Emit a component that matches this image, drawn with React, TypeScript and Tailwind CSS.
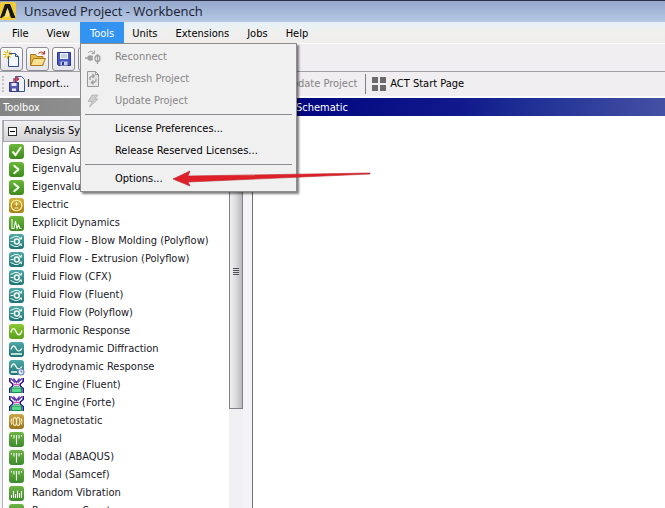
import type { ReactNode } from 'react'
import { clsx } from 'clsx'

type IconKind =
  | 'design'
  | 'eigen'
  | 'electric'
  | 'explicit'
  | 'fluid'
  | 'harmonic'
  | 'hydro'
  | 'hydroTime'
  | 'engine'
  | 'magnet'
  | 'modal'
  | 'random'

const SYSTEMS: { label: string; icon: IconKind }[] = [
  { label: 'Design Assessment', icon: 'design' },
  { label: 'Eigenvalue Buckling', icon: 'eigen' },
  { label: 'Eigenvalue Buckling (Samcef)', icon: 'eigen' },
  { label: 'Electric', icon: 'electric' },
  { label: 'Explicit Dynamics', icon: 'explicit' },
  { label: 'Fluid Flow - Blow Molding (Polyflow)', icon: 'fluid' },
  { label: 'Fluid Flow - Extrusion (Polyflow)', icon: 'fluid' },
  { label: 'Fluid Flow (CFX)', icon: 'fluid' },
  { label: 'Fluid Flow (Fluent)', icon: 'fluid' },
  { label: 'Fluid Flow (Polyflow)', icon: 'fluid' },
  { label: 'Harmonic Response', icon: 'harmonic' },
  { label: 'Hydrodynamic Diffraction', icon: 'hydro' },
  { label: 'Hydrodynamic Response', icon: 'hydroTime' },
  { label: 'IC Engine (Fluent)', icon: 'engine' },
  { label: 'IC Engine (Forte)', icon: 'engine' },
  { label: 'Magnetostatic', icon: 'magnet' },
  { label: 'Modal', icon: 'modal' },
  { label: 'Modal (ABAQUS)', icon: 'modal' },
  { label: 'Modal (Samcef)', icon: 'modal' },
  { label: 'Random Vibration', icon: 'random' },
  { label: 'Response Spectrum', icon: 'random' },
]

const TILE: Record<IconKind, string> = {
  design: 'from-[#6cb83a] to-[#3c8a1c]',
  eigen: 'from-[#6cb83a] to-[#3c8a1c]',
  electric: 'from-[#d6b43c] to-[#a87c10]',
  explicit: 'from-[#6cb83a] to-[#3c8a1c]',
  fluid: 'from-[#4fa9a8] to-[#1c7478]',
  harmonic: 'from-[#8cc832] to-[#5ca01c]',
  hydro: 'from-[#4fa9a8] to-[#1c7478]',
  hydroTime: 'from-[#4fa9a8] to-[#1c7478]',
  engine: 'from-white to-white',
  magnet: 'from-[#c8a848] to-[#987420]',
  modal: 'from-[#6cb444] to-[#3c8a2c]',
  random: 'from-[#6cb444] to-[#3c8a2c]',
}

const GLYPH: Record<IconKind, ReactNode> = {
  design: <path d="M3.500 7.500 6.500 11l5.500-8" strokeWidth="2" />,
  eigen: <path d="M5 3c.5 2.500 4 3 4.500 4.500C9 9 5.500 9.500 5 12" strokeWidth="2" />,
  electric: (
    <g stroke="#fff4b0">
      <circle cx="7.500" cy="7.500" r="5.300" />
      <path d="M5.500 6h4M7.500 4v4M5.500 10h4" />
    </g>
  ),
  explicit: <path d="M3 3v9.500h2L6.500 5 8 12.500 9.500 9l1.500 3.500h1.500" />,
  fluid: (
    <g>
      <circle cx="7.800" cy="7.500" r="2.400" strokeWidth="1.500" />
      <path d="M1.500 7.500h3" />
      <path d="M1.500 4.500 4 3.500c2.500-1.800 5.500-1.300 7.500 1M1.500 10.500l2.500 1c2.500 1.800 5.500 1.300 7.500-1" strokeWidth="1" />
      <path d="m13 2.500-.3 3.300-3-.8zM13 12.500l-.3-3.300-3 .8z" fill="#f4fff0" stroke="none" />
    </g>
  ),
  harmonic: <path d="M2 8.500c1-5 3.500-5 5-1s4 5 6-1" strokeWidth="1.400" />,
  hydro: <path d="M2 7.500c1.500-4.500 3.500-4.500 5-1s4 3 6 0M2 12h11" strokeWidth="1.300" />,
  hydroTime: (
    <g>
      <path d="M2 7.500c1.500-4.500 3.500-4.500 5-1s4 3 6 0M2 12h6" strokeWidth="1.300" />
      <circle cx="12" cy="12" r="3" fill="#e8f0ff" stroke="#6c8cc0" />
      <path d="M12 10.500V12h1.500" stroke="#305090" strokeWidth=".8" />
    </g>
  ),
  engine: (
    <g>
      <path d="M.8 0v3.500l3 2.500v2l-3 2.500v4.500M14.200 0v3.500l-3 2.500v2l3 2.500v4.500" stroke="#241890" strokeWidth="1.600" />
      <path d="m2 .5 4 4M13 .5l-4 4M4.500.500l3 4 3-4" stroke="#6038b0" strokeWidth="1.400" />
      <path d="M4.500 6.500h6" stroke="#d850c0" strokeWidth="1.500" />
      <path d="M2.500 10h10v4.500h-10z" fill="#58d890" stroke="#189048" />
      <path d="M5 8.500h5" stroke="#40b870" />
    </g>
  ),
  magnet: (
    <g stroke="#fff4c8">
      <ellipse cx="5.800" cy="7.500" rx="1.700" ry="4" />
      <ellipse cx="9.200" cy="7.500" rx="1.700" ry="4" />
      <path d="M2.700 4.500c-1 2-1 4 0 6M12.300 4.500c1 2 1 4 0 6" />
    </g>
  ),
  modal: <path d="M7.500 3v9.500M5 3v3.500M10 3v3.500M2.500 3v1.500M12.500 3v1.500" />,
  random: <path d="M2.500 12V9M4.500 12V5M6.500 12V8M8.500 12V4.500M10.500 12V7M12.500 12V5" />,
}

function SystemIcon({ kind }: { kind: IconKind }) {
  return (
    <span className={clsx('block size-[15px] shrink-0 rounded-[3px] bg-linear-to-b', TILE[kind])}>
      <svg viewBox="0 0 15 15" className="size-full overflow-visible" fill="none" stroke="#f4fff0" strokeWidth="1.100" aria-hidden>
        {GLYPH[kind]}
      </svg>
    </span>
  )
}

function LogoIcon() {
  return (
    <svg viewBox="0 0 16 18" className="h-[18px] w-4 shrink-0" aria-hidden>
      <rect width="16" height="18" rx="2" fill="#f2cc38" />
      <path d="M5 2h5l5.500 14H11L7.500 6 5 13.500 1.500 16H0z" fill="#181818" />
      <path d="m7.500 6 2 6-1.500 3H4.500z" fill="#fbe488" />
    </svg>
  )
}

function NewIcon() {
  return (
    <svg viewBox="0 0 18 18" className="size-[18px]" aria-hidden>
      <path d="M5.500 3.500h7l3 3v10h-10z" fill="#f4f8ff" stroke="#30508c" />
      <path d="M12.500 3.500v3h3" fill="#b8cce8" stroke="#30508c" />
      <path d="M4.500 0v9M0 4.500h9M1.300 1.300l6.400 6.400M7.700 1.300 1.300 7.700" stroke="#d8b820" strokeWidth="1.200" />
      <circle cx="4.500" cy="4.500" r="1.500" fill="#fff6a0" />
    </svg>
  )
}

function OpenIcon() {
  return (
    <svg viewBox="0 0 18 18" className="size-[18px]" aria-hidden>
      <path d="M1.500 15.500v-11h5l1.500 2h6v9z" fill="#e8b848" stroke="#a87820" />
      <path d="m1.500 15.500 3-7h12l-3 7z" fill="#fbe090" stroke="#a87820" />
      <path d="M9.500 3.500c1.500-2 4-2 5.500 0M15.500 1v3h-3" fill="none" stroke="#c03828" strokeWidth="1.200" />
    </svg>
  )
}

function SaveIcon() {
  return (
    <svg viewBox="0 0 18 18" className="size-[18px]" aria-hidden>
      <path d="M2.500 2.500h13v13h-12l-1-1z" fill="#4858c0" stroke="#2c3890" />
      <path d="M5 3h8v6H5z" fill="#eef2ff" />
      <path d="M6 5h6M6 7h6" stroke="#a0a8d8" />
      <path d="M5.500 11.500h7v4h-7z" fill="#c8d0f0" />
      <path d="M7 12h2v3H7z" fill="#2c3890" />
    </svg>
  )
}

function ImportIcon() {
  return (
    <svg viewBox="0 0 16 16" className="size-4" aria-hidden>
      <path d="M6.500.500h6l3 3v12h-9z" fill="#eef4ff" stroke="#38588c" />
      <path d="M.5 6.500h9v9h-9z" fill="#5858b0" stroke="#383880" />
      <path d="M2.500 7h5v3h-5zM3 12.500h4V15H3z" fill="#e4e8fc" />
      <path d="M5 7V3h4M7 .5 9.500 3 7 5.500" fill="none" stroke="#b03858" strokeWidth="1.500" />
    </svg>
  )
}

function ReconnectIcon() {
  return (
    <svg viewBox="0 0 16 16" className="size-4" fill="none" stroke="#a0a0a0" strokeWidth="1.300" aria-hidden>
      <circle cx="5" cy="9" r="2" fill="#a0a0a0" />
      <path d="M0 9h3M5 7.500h3M5 10.500h3M12.500 5v10" />
      <ellipse cx="12.500" cy="9.500" rx="2.500" ry="3" />
      <path d="M3 4C5 1.500 7 2 9 4M9.500 1.500v3H6.500" strokeWidth="1" />
    </svg>
  )
}

function RefreshIcon() {
  return (
    <svg viewBox="0 0 16 16" className="size-4" fill="none" stroke="#989898" aria-hidden>
      <path d="M2.500.500h8l3 3v12h-11z" fill="#e8e8e8" />
      <path d="M10.500.500v3h3" />
      <path d="M5 9V6.500L7 5h2M7.500 3 9.500 5l-2 2M11 7.500V10l-2 1.500H7M8.500 9.500l-2 2 2 2" strokeWidth="1.200" />
    </svg>
  )
}

function UpdateIcon() {
  return (
    <svg viewBox="0 0 16 16" className="size-4" aria-hidden>
      <path d="M7 2h6l-3 4h3L4.500 14 7 8.500H3z" fill="#cccccc" stroke="#b0b0b0" strokeWidth=".8" />
    </svg>
  )
}

function TilesIcon() {
  return (
    <svg viewBox="0 0 14 14" className="size-3.5" fill="#6a6a6a" aria-hidden>
      <path d="M0 0h6v6H0zM8 0h6v6H8zM0 8h6v6H0zM8 8h6v6H8z" />
    </svg>
  )
}

interface MenuEntryProps {
  label: string
  icon?: ReactNode
  disabled?: boolean
}

function MenuEntry({ label, icon, disabled }: MenuEntryProps) {
  return (
    <button
      type="button"
      role="menuitem"
      disabled={disabled}
      className="flex h-[22px] w-full items-center gap-3.5 pl-1 text-left text-black disabled:text-[#858585]"
    >
      <span className="size-4 shrink-0">{icon}</span>
      {label}
    </button>
  )
}

function MenuRule() {
  return <div role="separator" className="mx-1 mt-0.5 mb-[3px] h-px bg-[#8a8a90]" />
}

function ToolsMenu() {
  return (
    <div
      role="menu"
      aria-label="Tools"
      className="absolute top-full left-0 z-10 w-[217px] border border-[#8c8c8c] bg-[#f1f0f1] pt-0.5 pb-px shadow-[2px_2px_2px_rgba(0,0,0,0.5)]"
    >
      <MenuEntry label="Reconnect" icon={<ReconnectIcon />} disabled />
      <MenuEntry label="Refresh Project" icon={<RefreshIcon />} disabled />
      <MenuEntry label="Update Project" icon={<UpdateIcon />} disabled />
      <MenuRule />
      <MenuEntry label="License Preferences..." />
      <MenuEntry label="Release Reserved Licenses..." />
      <MenuRule />
      <MenuEntry label="Options..." />
      {/* Pointer to the Options entry */}
      <svg viewBox="0 0 200 18" className="pointer-events-none absolute bottom-1 left-[91px] h-[18px] w-[200px]" aria-hidden>
        <path d="M1 10 18 2l-2 5 182-3v1L16 13l2 4z" fill="#e02028" stroke="#b82028" strokeWidth=".6" />
      </svg>
    </div>
  )
}

function MenuBar() {
  return (
    <nav className="flex h-[22px] shrink-0 items-stretch border-b border-white bg-linear-to-b from-[#e6f2f8] via-[#f0efed] to-[#efeeec] pl-1">
      <button type="button" className="px-2 pt-0.5">File</button>
      <button type="button" className="px-2.5 pt-0.5">View</button>
      <div className="relative flex">
        <button type="button" aria-haspopup="menu" aria-expanded className="bg-[#3393f0] px-2.5 pt-0.5 text-white">
          Tools
        </button>
        <ToolsMenu />
      </div>
      <button type="button" className="px-2 pt-0.5">Units</button>
      <button type="button" className="px-2.5 pt-0.5">Extensions</button>
      <button type="button" className="px-2 pt-0.5">Jobs</button>
      <button type="button" className="px-2.5 pt-0.5">Help</button>
    </nav>
  )
}

function FileButton({ label, children }: { label: string; children: ReactNode }) {
  return (
    <button
      type="button"
      aria-label={label}
      className="flex h-6 w-[23px] items-center justify-center rounded-[3px] border border-[#8c8c94] bg-linear-to-b from-white to-[#e4e4ea]"
    >
      {children}
    </button>
  )
}

function Toolbars() {
  return (
    <div className="shrink-0 bg-[#f0eef0]">
      <div className="flex h-[28px] items-center gap-[3px] border-b border-[#a0a0a4] pt-0.5">
        <FileButton label="New"><NewIcon /></FileButton>
        <FileButton label="Open"><OpenIcon /></FileButton>
        <FileButton label="Save"><SaveIcon /></FileButton>
        <FileButton label="Save As"><SaveIcon /></FileButton>
      </div>
      <div className="flex h-[26px] items-center border-b-2 border-white">
        <span className="mx-0.5 h-4 border-l-2 border-dotted border-[#c4c4c8]" />
        <button type="button" className="ml-[3px] flex items-center gap-0.5"><ImportIcon />Import...</button>
        <span className="mr-1.5 ml-3 h-5 w-px bg-[#909094]" />
        <button type="button" disabled className="flex items-center gap-0.5 text-[#858585]"><ReconnectIcon />Reconnect</button>
        <button type="button" disabled className="ml-2 flex items-center gap-0.5 text-[#858585]"><RefreshIcon />Refresh Project</button>
        <button type="button" disabled className="ml-2 flex items-center gap-0.5 text-[#858585]"><UpdateIcon />Update Project</button>
        <span className="mr-1.5 ml-2 h-5 w-px bg-[#808084]" />
        <button type="button" className="flex items-center gap-1"><TilesIcon />ACT Start Page</button>
      </div>
    </div>
  )
}

function Toolbox() {
  return (
    <aside className="flex w-[253px] shrink-0 flex-col border-r border-[#70707c] bg-[#f4f3f5]">
      <h2 className="h-[18px] shrink-0 bg-linear-to-r from-[#848484] to-[#a8a8a8] pl-[3px] leading-5 text-white">Toolbox</h2>
      <div className="mt-1 mr-[9px] ml-0.5 flex min-h-0 flex-1 border-l border-[#b0b0b8] bg-white">
        <div className="min-w-0 flex-1 overflow-hidden">
          <button
            type="button"
            aria-expanded
            className="flex h-[22px] w-full items-center gap-[7px] border border-[#a8a8b0] bg-linear-to-b from-[#f0f0f2] to-[#d4d4d8] pl-1"
          >
            <span className="flex size-[9px] items-center justify-center border border-[#303030] bg-white">
              <span className="h-px w-[5px] bg-black" />
            </span>
            Analysis Systems
          </button>
          <ul>
            {SYSTEMS.map((system) => (
              <li key={system.label} className="flex h-[18px] items-center gap-2 pl-1.5 whitespace-nowrap text-[#202028]">
                <SystemIcon kind={system.icon} />
                {system.label}
              </li>
            ))}
          </ul>
        </div>
        {/* Scrollbar */}
        <div className="w-3.5 shrink-0 bg-[#f0eff1] pt-3.5 pb-[99px]">
          <div className="flex h-full flex-col items-center justify-center gap-px border border-[#80808a] bg-linear-to-r from-[#f0f0f2] via-[#dcdcde] to-[#b8b8bc]">
            <span className="h-px w-1.5 bg-[#505058]" />
            <span className="h-px w-1.5 bg-[#505058]" />
            <span className="h-px w-1.5 bg-[#505058]" />
            <span className="h-px w-1.5 bg-[#505058]" />
          </div>
        </div>
      </div>
    </aside>
  )
}

export default function App() {
  return (
    <div className="flex h-screen flex-col overflow-hidden bg-white font-['DejaVu_Sans_Condensed','DejaVu_Sans',sans-serif] text-[11px] leading-4 text-black">
      <header className="flex h-[22px] shrink-0 items-center gap-2 border-t border-[#28304c] bg-linear-to-b from-[#98a8cc] via-[#a4b8d8] to-[#b8c8e4] pb-0.5">
        <LogoIcon />
        <h1 className="font-['Open_Sans',sans-serif] text-[13px] text-[#182030]">Unsaved Project - Workbench</h1>
      </header>
      <MenuBar />
      <Toolbars />
      <main className="flex min-h-0 flex-1">
        <Toolbox />
        <section className="min-w-0 flex-1 bg-white">
          <h2 className="h-[18px] bg-linear-to-r from-[#00007c] via-[#10188c] to-[#4450a4] pl-1.5 leading-5 text-white">
            Project Schematic
          </h2>
        </section>
      </main>
    </div>
  )
}
